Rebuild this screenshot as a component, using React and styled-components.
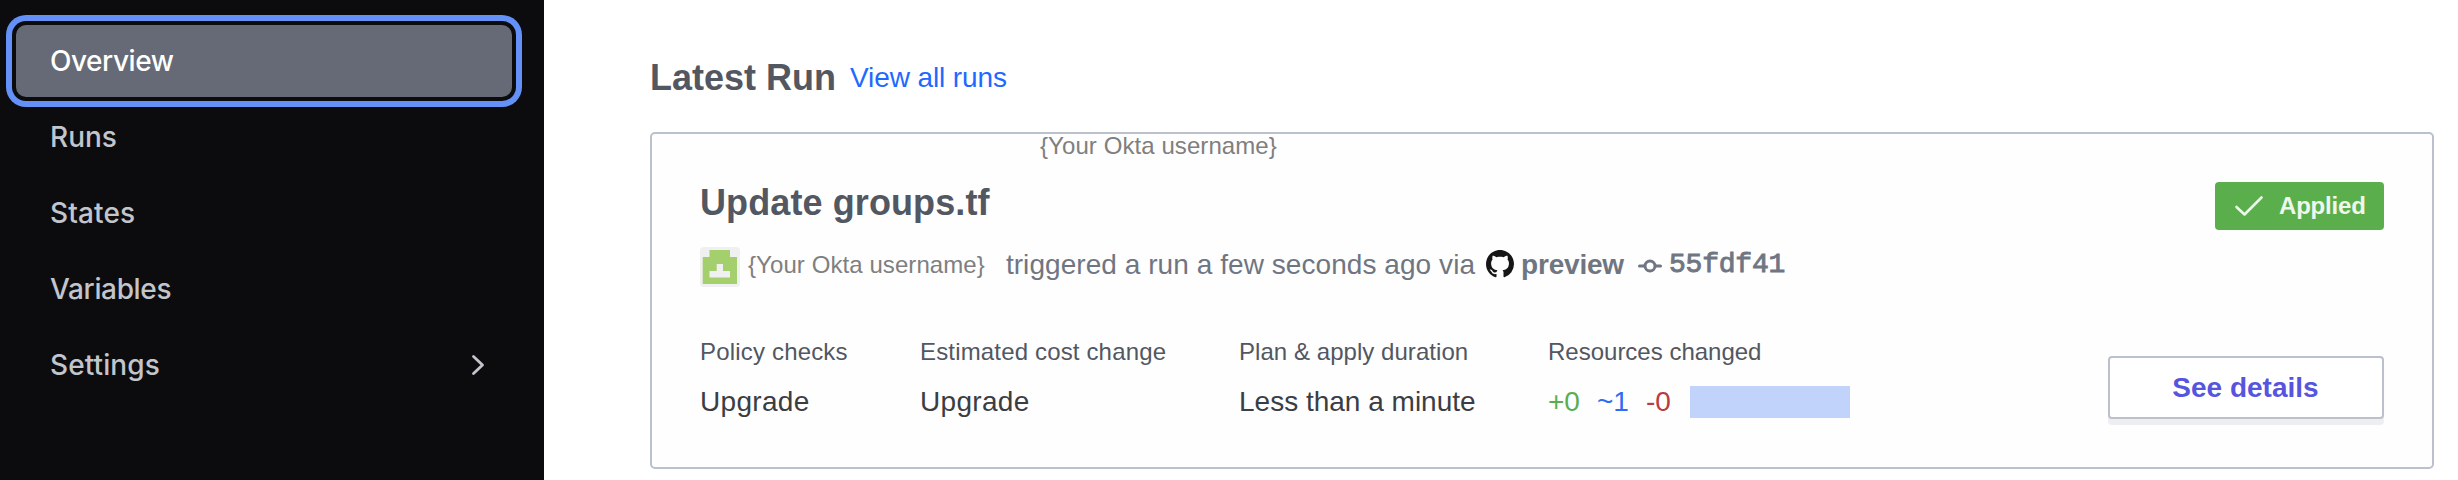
import React from "react";
import styled, { createGlobalStyle } from "styled-components";

const GlobalStyle = createGlobalStyle`
  * { box-sizing: border-box; }
  body { margin: 0; background: #fff; }
  h2, h3, p { margin: 0; }
`;

const Page = styled.div`
  display: flex;
  height: 480px;
  overflow: hidden;
  font-family: "Liberation Sans", Arial, sans-serif;
  font-size: 28px;
  white-space: nowrap;
`;

const Sidebar = styled.nav`
  display: flex;
  flex-direction: column;
  gap: 4px;
  width: 544px;
  flex: none;
  padding: 25px 32px 0 16px;
  background: #0c0c0e;
`;

const NavItem = styled.a`
  display: flex;
  align-items: center;
  justify-content: space-between;
  height: 72px;
  flex: none;
  padding: 0 27px 0 34px;
  border-radius: 10px;
  font: 500 28px/73px Inter, sans-serif;
  letter-spacing: ${(p) => p.$tracking || 0}px;
  color: ${(p) => (p.$active ? "#fff" : "#c2c5cb")};
  background: ${(p) => (p.$active ? "#656a76" : "transparent")};
  box-shadow: ${(p) => (p.$active ? "0 0 0 4px #0c0c0e, 0 0 0 10px #6491f8" : "none")};
`;

const Main = styled.main`
  display: flex;
  flex-direction: column;
  flex: 1;
  padding: 56px 24px 0 106px;
`;

const Header = styled.header`
  display: flex;
  align-items: center;
  gap: 14px;
  height: 43px;
  margin-bottom: 33px;
`;

const Title = styled.h2`
  font-size: 36px;
  line-height: 40px;
  font-weight: 700;
  color: #525761;
`;

const RunTitle = styled(Title)`
  height: 40px;
  line-height: 42px;
  letter-spacing: 0.1px;
`;

const Link = styled.a`
  line-height: 40px;
  letter-spacing: -0.1px;
  color: #1f69ff;
`;

const Card = styled.section`
  position: relative;
  display: flex;
  justify-content: space-between;
  height: 337px;
  padding: 48px;
  border: 2px solid #bac1cc;
  border-radius: 5px;
  background: #fefefe;
`;

const Username = styled.span`
  font-size: 24px;
  letter-spacing: 0.08px;
  color: #7f7f7f;
`;

const FloatingUsername = styled(Username)`
  position: absolute;
  top: -5px;
  left: 388px;
  line-height: 34px;
`;

const Details = styled.div`
  display: flex;
  flex-direction: column;
`;

const Byline = styled.div`
  display: flex;
  height: 40px;
  margin: 25px 0 50px;
  line-height: 35px;
  color: #6f7682;
`;

const Avatar = styled.svg`
  flex: none;
  width: 40px;
  height: 40px;
  margin-right: 8px;
`;

const Action = styled.span`
  margin: 0 11px 0 21px;
  letter-spacing: 0.06px;
`;

const GithubMark = styled.svg`
  flex: none;
  width: 28px;
  height: 28px;
  margin: 3px 7px 0 0;
`;

const Branch = styled.strong`
  letter-spacing: -0.2px;
`;

const CommitMark = styled.svg`
  flex: none;
  width: 24px;
  height: 14px;
  margin: 12px 7px 0 14px;
`;

const Hash = styled.code`
  font: 400 28px/35px "Liberation Mono", monospace;
  -webkit-text-stroke: 0.9px currentColor;
  letter-spacing: -0.2px;
`;

const Stats = styled.div`
  display: grid;
  grid-template-columns: 220px 319px 309px auto;
`;

const Stat = styled.div`
  display: flex;
  flex-direction: column;
  gap: 19px;
`;

const StatLabel = styled.span`
  font-size: 24px;
  line-height: 30px;
  letter-spacing: ${(p) => p.$tracking || 0}px;
  color: #525761;
`;

const StatValue = styled.span`
  display: flex;
  gap: 17px;
  height: 32px;
  line-height: 31px;
  letter-spacing: ${(p) => p.$tracking || 0}px;
  color: #3b3d45;
`;

const Delta = styled.span`
  color: ${(p) => p.$color};
`;

const ChangeBar = styled.span`
  width: 160px;
  height: 32px;
  margin-left: 2px;
  background: #c2d3fb;
`;

const Aside = styled.div`
  display: flex;
  flex-direction: column;
  align-items: flex-end;
  justify-content: space-between;
`;

const Badge = styled.span`
  display: flex;
  align-items: center;
  width: 169px;
  height: 48px;
  padding-left: 19px;
  gap: 15px;
  border-radius: 4px;
  background: #5bae4c;
  color: #eef7ed;
  font-size: 24px;
  font-weight: 700;
  letter-spacing: -0.2px;
  line-height: 50px;
`;

const Button = styled.button`
  width: 276px;
  height: 63px;
  padding: 0 1px 0 0;
  border: 2px solid #bac1cc;
  border-radius: 4px;
  background: #fff;
  box-shadow: 0 6px 1px #eeedf0;
  font: 700 28px/59px "Liberation Sans", Arial, sans-serif;
  color: #5755de;
`;

const NAV = [
  { label: "Overview", active: true, tracking: -0.45 },
  { label: "Runs" },
  { label: "States", tracking: 0.13 },
  { label: "Variables", tracking: -0.35 },
  { label: "Settings", tracking: 0.1, chevron: true },
];

const STATS = [
  { label: "Policy checks", tracking: 0.18, value: "Upgrade", valueTracking: 0.3 },
  { label: "Estimated cost change", tracking: 0.16, value: "Upgrade", valueTracking: 0.3 },
  { label: "Plan & apply duration", tracking: 0.05, value: "Less than a minute" },
];

const Chevron = () => (
  <svg width="14" height="22" viewBox="0 0 14 22" fill="none">
    <path d="M2.500 2.500 11.500 11l-9 8.500" stroke="#c2c5cb" strokeWidth="2.800" strokeLinecap="round" strokeLinejoin="round" />
  </svg>
);

export default function App() {
  return (
    <Page>
      <GlobalStyle />
      <Sidebar>
        {NAV.map((n) => (
          <NavItem key={n.label} $active={n.active} $tracking={n.tracking}>
            {n.label}
            {n.chevron && <Chevron />}
          </NavItem>
        ))}
      </Sidebar>
      <Main>
        <Header>
          <Title>Latest Run</Title>
          <Link>View all runs</Link>
        </Header>
        <Card>
          <FloatingUsername>{"{Your Okta username}"}</FloatingUsername>
          <Details>
            <RunTitle as="h3">Update groups.tf</RunTitle>
            <Byline>
              <Avatar viewBox="0 0 40 40">
                <rect width="40" height="40" rx="4" fill="#f0f0f0" />
                <path
                  d="M9.500 3h20.500v7h7v27H2.700V10h6.800zM16.700 17v7H9.500v6.500h20.500V24h-7v-7z"
                  fill="#a3d06c"
                  fillRule="evenodd"
                />
              </Avatar>
              <Username>{"{Your Okta username}"}</Username>
              <Action>triggered a run a few seconds ago via</Action>
              <GithubMark viewBox="0 0 16 16" fill="#161616">
                <path d="M8 0C3.580 0 0 3.580 0 8c0 3.540 2.290 6.530 5.470 7.590.4.070.55-.17.55-.38 0-.19-.01-.82-.01-1.490-2.010.37-2.530-.49-2.690-.94-.09-.23-.48-.94-.82-1.130-.28-.15-.68-.52-.01-.53.63-.01 1.080.58 1.230.82.72 1.210 1.870.87 2.330.66.07-.52.28-.87.51-1.070-1.780-.2-3.640-.89-3.640-3.950 0-.87.31-1.590.82-2.150-.08-.2-.36-1.020.08-2.120 0 0 .67-.21 2.200.82.64-.18 1.320-.27 2-.27s1.360.09 2 .27c1.530-1.040 2.200-.82 2.200-.82.44 1.100.16 1.920.08 2.120.51.56.82 1.270.82 2.150 0 3.070-1.870 3.750-3.650 3.950.29.25.54.73.54 1.480 0 1.070-.01 1.930-.01 2.200 0 .21.15.46.55.38A8.010 8.010 0 0 0 16 8c0-4.420-3.580-8-8-8z" />
              </GithubMark>
              <Branch>preview</Branch>
              <CommitMark viewBox="0 0 24 14" fill="none" stroke="#6f7682" strokeWidth="3" strokeLinecap="round">
                <circle cx="12" cy="7" r="5" />
                <path d="M1.500 7h5M17.500 7h5" />
              </CommitMark>
              <Hash>55fdf41</Hash>
            </Byline>
            <Stats>
              {STATS.map((s) => (
                <Stat key={s.label}>
                  <StatLabel $tracking={s.tracking}>{s.label}</StatLabel>
                  <StatValue $tracking={s.valueTracking}>{s.value}</StatValue>
                </Stat>
              ))}
              <Stat>
                <StatLabel>Resources changed</StatLabel>
                <StatValue>
                  <Delta $color="#5bae4c">+0</Delta>
                  <Delta $color="#2f6bf5">~1</Delta>
                  <Delta $color="#b83c42">-0</Delta>
                  <ChangeBar />
                </StatValue>
              </Stat>
            </Stats>
          </Details>
          <Aside>
            <Badge>
              <svg width="30" height="22" viewBox="0 0 30 22" fill="none">
                <path d="M2.500 12 10.500 19.500 27.500 2.500" stroke="#eef7ed" strokeWidth="2.600" strokeLinecap="round" strokeLinejoin="round" />
              </svg>
              Applied
            </Badge>
            <Button>See details</Button>
          </Aside>
        </Card>
      </Main>
    </Page>
  );
}
